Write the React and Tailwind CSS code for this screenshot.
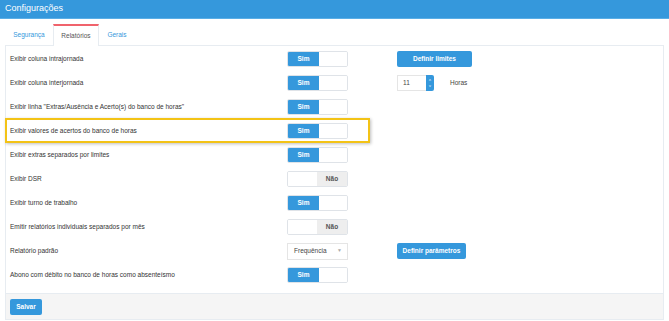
import React from 'react';

const rows = [
  { label: 'Exibir coluna intrajornada', type: 'on', extra: 'limites' },
  { label: 'Exibir coluna interjornada', type: 'on', extra: 'horas' },
  { label: 'Exibir linha "Extras/Ausência e Acerto(s) do banco de horas"', type: 'on' },
  { label: 'Exibir valores de acertos do banco de horas', type: 'on', highlight: true },
  { label: 'Exibir extras separados por limites', type: 'on' },
  { label: 'Exibir DSR', type: 'off' },
  { label: 'Exibir turno de trabalho', type: 'on' },
  { label: 'Emitir relatórios individuais separados por mês', type: 'off' },
  { label: 'Relatório padrão', type: 'select', extra: 'parametros' },
  { label: 'Abono com débito no banco de horas como absenteísmo', type: 'on' },
];

const Toggle = ({ on }) => (
  <div className="flex w-[61px] h-[16px] border border-[#dfe3e8] rounded-[2px] overflow-hidden">
    {on ? (
      <>
        <div className="w-[31px] bg-[#3598dc] text-white font-bold flex items-center justify-center">Sim</div>
        <div className="flex-1 bg-white" />
      </>
    ) : (
      <>
        <div className="flex-1 bg-white" />
        <div className="w-[30px] bg-[#eeeeee] text-[#555] font-bold flex items-center justify-center">Não</div>
      </>
    )}
  </div>
);

const Control = ({ row }) => {
  if (row.type === 'select') {
    return (
      <div className="flex items-center justify-between w-[61px] h-[17px] border border-[#e5e5e5] bg-white pl-[6px] pr-[5px] text-[#444]">
        <span>Frequência</span>
        <span className="text-[#aaa] text-[5px]">▼</span>
      </div>
    );
  }
  return <Toggle on={row.type === 'on'} />;
};

const Extra = ({ kind }) => {
  if (kind === 'limites') {
    return (
      <div className="w-[75px] h-[16px] bg-[#3598dc] rounded-[2px] text-white font-bold flex items-center justify-center">
        Definir limites
      </div>
    );
  }
  if (kind === 'parametros') {
    return (
      <div className="w-[69px] h-[16px] bg-[#3598dc] rounded-[2px] text-white font-bold flex items-center justify-center">
        Definir parâmetros
      </div>
    );
  }
  if (kind === 'horas') {
    return (
      <div className="flex items-center">
        <div className="flex h-[16px]">
          <div className="w-[29px] border border-[#e5e5e5] border-r-0 bg-white flex items-center pl-[5px] text-[#444]">11</div>
          <div className="w-[8px] bg-[#3598dc] rounded-r-[2px] flex flex-col items-center justify-center text-white text-[4px] leading-[6px]">
            <span>˄</span>
            <span>˅</span>
          </div>
        </div>
        <span className="ml-[16px] text-[#444]">Horas</span>
      </div>
    );
  }
  return null;
};

export default function App() {
  return (
    <div className="w-[669px] h-[321px] bg-white text-[6.5px] text-[#333] font-['Liberation_Sans',Arial,sans-serif] overflow-hidden">
      <div className="h-[19px] bg-[#3598dc] border-b border-[#5aaee6] flex items-center px-[5px] text-white text-[9px]">
        Configurações
      </div>
      <div className="px-[5px] pt-[5px]">
        <div className="flex h-[21px] text-[#3598dc]">
          <div className="w-[48px] flex items-center justify-center">Segurança</div>
          <div className="w-[46px] bg-white border-t-2 border-t-[#f0636c] border-x border-x-[#e7ecf1] text-[#555] flex items-center justify-center relative z-10 mb-[-1px]">
            Relatórios
          </div>
          <div className="w-[36px] flex items-center justify-center">Gerais</div>
        </div>
        <div className="w-[659px] h-[275px] border border-[#e7ecf1] flex flex-col">
          <div className="flex flex-col pt-[1px] flex-1">
            {rows.map((row, i) => (
              <div key={i} className="relative flex items-center h-[24px] pl-[4px]">
                {row.highlight && (
                  <div className="absolute left-[-1px] top-[-1px] w-[365px] h-[25px] border-2 border-[#f3c316] shadow-[1px_1px_3px_rgba(0,0,0,0.25)] pointer-events-none" />
                )}
                <div className="w-[277px]">{row.label}</div>
                <Control row={row} />
                <div className="ml-[49px]">
                  <Extra kind={row.extra} />
                </div>
              </div>
            ))}
          </div>
          <div className="h-[26px] bg-[#f5f5f5] border-t border-[#e7ecf1] flex items-center pl-[4px]">
            <div className="w-[32px] h-[16px] bg-[#3598dc] rounded-[2px] text-white font-bold flex items-center justify-center">
              Salvar
            </div>
          </div>
        </div>
      </div>
    </div>
  );
}
